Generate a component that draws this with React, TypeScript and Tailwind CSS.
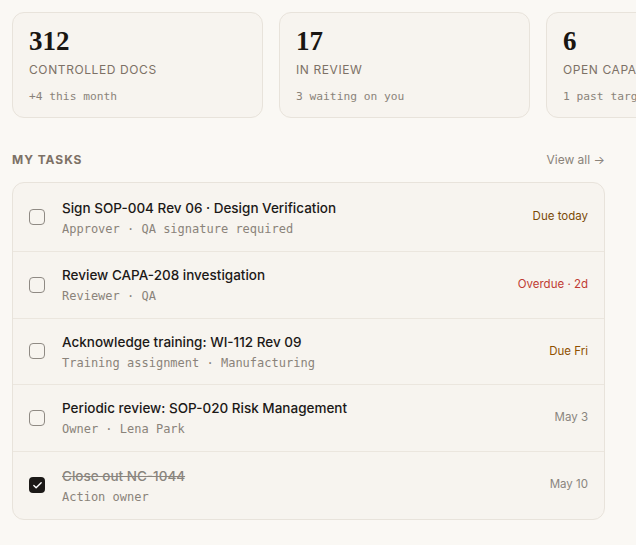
import { Check } from 'lucide-react';

interface Stat {
    value: string;
    label: string;
    note: string;
}

interface Task {
    title: string;
    meta: string;
    due: string;
    dueClass: string;
    done?: boolean;
}

const stats: Stat[] = [
    { value: '312', label: 'Controlled docs', note: '+4 this month' },
    { value: '17', label: 'In review', note: '3 waiting on you' },
    { value: '6', label: 'Open CAPAs', note: '1 past target date' },
];

const tasks: Task[] = [
    { title: 'Sign SOP-004 Rev 06 · Design Verification', meta: 'Approver · QA signature required', due: 'Due today', dueClass: 'text-[#7a4a06]' },
    { title: 'Review CAPA-208 investigation', meta: 'Reviewer · QA', due: 'Overdue · 2d', dueClass: 'text-[#c03c33]' },
    { title: 'Acknowledge training: WI-112 Rev 09', meta: 'Training assignment · Manufacturing', due: 'Due Fri', dueClass: 'text-[#8f5000]' },
    { title: 'Periodic review: SOP-020 Risk Management', meta: 'Owner · Lena Park', due: 'May 3', dueClass: 'text-[#8a857e]' },
    { title: 'Close out NC-1044', meta: 'Action owner', due: 'May 10', dueClass: 'text-[#8a857e]', done: true },
];

const mono = "font-['DejaVu_Sans_Mono',monospace]";

const App = () => {
    return (
        <div className="w-[636px] h-[545px] overflow-hidden bg-[#faf8f4] font-['Inter',sans-serif] text-[#1c1917]">
            <div className="px-3 pt-3">
                <div className="flex gap-4">
                    {stats.map((s) => (
                        <div key={s.label} className="w-[251px] shrink-0 rounded-xl border border-[#e8e3db] bg-[#f7f4ef] px-4 pt-3 pb-3">
                            <div className="font-['Liberation_Serif',serif] text-[27px] font-bold leading-8 text-[#1a1612]">{s.value}</div>
                            <div className="mt-[5px] text-[12px] leading-4 uppercase tracking-[0.05em] text-[#7d7166]">{s.label}</div>
                            <div className={`${mono} mt-[11px] text-[11.25px] leading-4 text-[#8a837a]`}>{s.note}</div>
                        </div>
                    ))}
                </div>

                <div className="w-[593px] mt-8">
                    <div className="flex items-center justify-between h-5 mb-3">
                        <h2 className="text-[12px] font-bold uppercase tracking-[0.08em] text-[#7d7166]">My Tasks</h2>
                        <span className="text-[12px] text-[#8a837a]">View all →</span>
                    </div>

                    <div className="rounded-xl border border-[#e8e3db] bg-[#f7f4ef]">
                        {tasks.map((t, idx) => (
                            <div
                                key={t.title}
                                className={`flex items-center gap-4 px-4 ${idx > 0 ? 'border-t border-[#ebe6de]' : ''} ${idx === 0 || idx === tasks.length - 1 ? 'h-[68px]' : 'h-[66.5px]'}`}
                            >
                                {t.done ? (
                                    <span className="w-4 h-4 rounded-[4px] bg-[#1c1917] flex items-center justify-center">
                                        <Check size={11} strokeWidth={3} className="text-white" />
                                    </span>
                                ) : (
                                    <span className="w-4 h-4 rounded-[4px] border-[1.5px] border-[#8f8a84]" />
                                )}
                                <div className="flex-1 min-w-0 pl-px">
                                    <div className={`text-[13.5px] leading-5 font-medium ${t.done ? 'line-through text-[#8a857e]' : 'text-[#1c1917]'}`}>{t.title}</div>
                                    <div className={`${mono} mt-[3px] text-[12px] leading-4 text-[#8a837a]`}>{t.meta}</div>
                                </div>
                                <span className={`text-[11.5px] ${t.dueClass}`}>{t.due}</span>
                            </div>
                        ))}
                    </div>
                </div>
            </div>
        </div>
    );
};

export default App;
